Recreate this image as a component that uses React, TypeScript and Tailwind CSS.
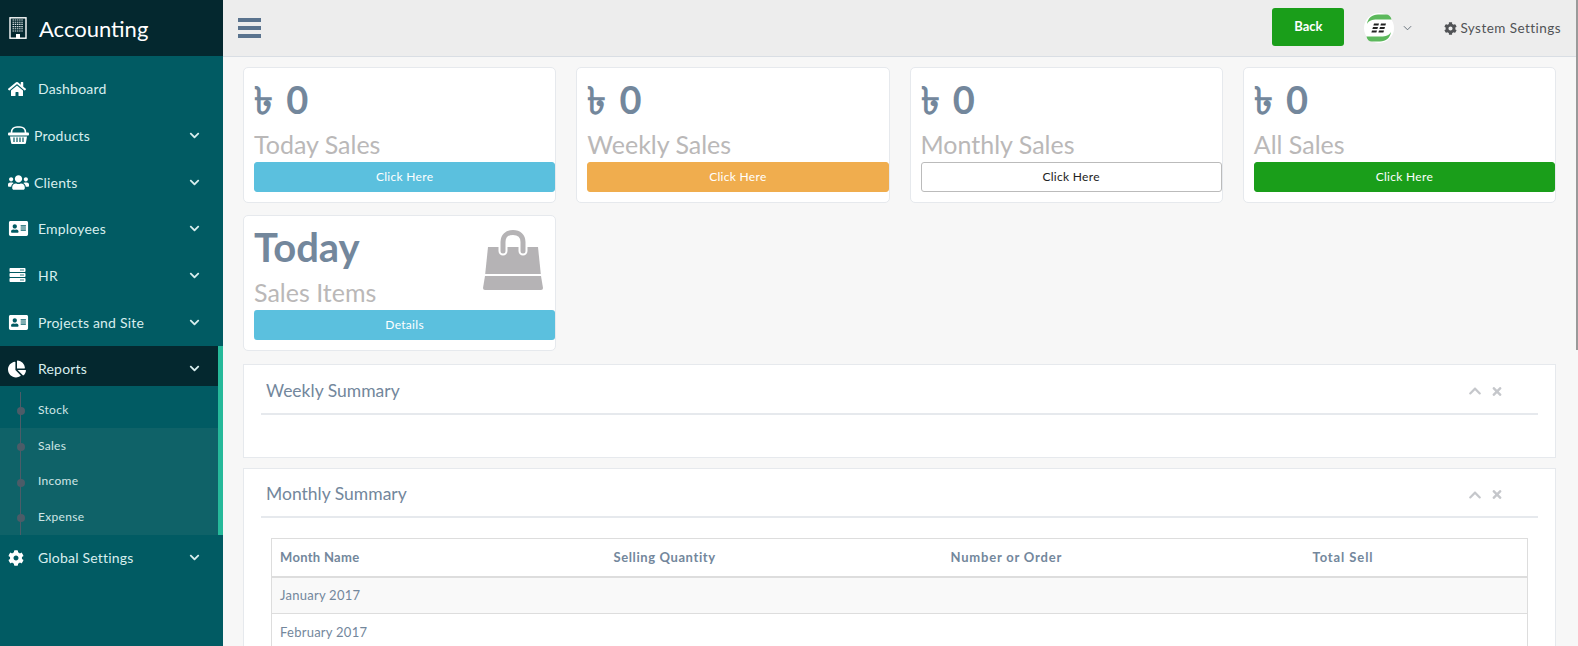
import type { ReactNode } from 'react';
import {
  FaAddressCard,
  FaChartPie,
  FaChevronDown,
  FaChevronUp,
  FaCog,
  FaHome,
  FaServer,
  FaTimes,
  FaUsers,
} from 'react-icons/fa';

function BasketIcon() {
  return (
    <svg viewBox="0 0 21 18" className="h-[18px] w-[21px]" fill="#fff">
      <path d="M3.500 7V6.500C3.500 3 6 1 9 1h3c3 0 5.500 2 5.500 5.500V7" fill="none" stroke="#fff" strokeWidth="1.6" />
      <rect x="0" y="6.500" width="21" height="3" rx="1" />
      <path d="M2 10.500h17l-1 6a1.500 1.500 0 0 1-1.500 1.500h-12A1.500 1.500 0 0 1 3 16.500z" />
      <path d="M6 11.500v4.500M9 11.500v4.500M12 11.500v4.500M15 11.500v4.500" stroke="#015b63" strokeWidth="1.2" />
    </svg>
  );
}

const menuItems = [
  { label: 'Products', icon: <BasketIcon />, textLeft: 'pl-[5px]' },
  { label: 'Clients', icon: <FaUsers className="h-[19px] w-[21px]" />, textLeft: 'pl-[5px]' },
  { label: 'Employees', icon: <FaAddressCard className="h-[17px] w-[21px]" />, textLeft: 'pl-[9px]' },
  { label: 'HR', icon: <FaServer className="h-[16px] w-[19px]" />, textLeft: 'pl-[9px]' },
  { label: 'Projects and Site', icon: <FaAddressCard className="h-[17px] w-[21px]" />, textLeft: 'pl-[9px]' },
];

const subItems = ['Stock', 'Sales', 'Income', 'Expense'];

const salesCards = [
  { label: 'Today Sales', button: 'bg-[#5bc0de] text-white border-[#5bc0de]' },
  { label: 'Weekly Sales', button: 'bg-[#f0ad4e] text-white border-[#f0ad4e]' },
  { label: 'Monthly Sales', button: 'bg-white text-[#222] border-[#bbb]' },
  { label: 'All Sales', button: 'bg-[#1a9e1a] text-white border-[#1a9e1a]' },
];

function BuildingIcon() {
  return (
    <svg viewBox="0 0 18 22" className="h-[22px] w-[18px]">
      <rect x="1" y="0.8" width="16" height="20.400" fill="#04282f" stroke="#fff" strokeWidth="1.4" />
      <path d="M3.500 3h11M3.500 5.200h11M3.500 7.400h11M3.500 9.600h11M3.500 11.800h11M3.500 14h11" stroke="#d5dde0" strokeWidth="1.1" strokeDasharray="1.5 0.7" />
      <rect x="7" y="17" width="4" height="4.500" fill="#fff" />
    </svg>
  );
}

function BagIcon() {
  return (
    <svg viewBox="0 0 60 60" className="h-[60px] w-[60px]">
      <path d="M5 17h50l2.800 27H2.200z" fill="#b5b3b5" />
      <path d="M20 21v-9C20 6 24 2.500 30 2.500S40 6 40 12v9" fill="none" stroke="#fff" strokeWidth="9" strokeLinecap="round" />
      <path d="M20 21v-9C20 6 24 2.500 30 2.500S40 6 40 12v9" fill="none" stroke="#b5b3b5" strokeWidth="5" strokeLinecap="round" />
      <path d="M2 46h56l2 12a2 2 0 0 1-2 2H2a2 2 0 0 1-2-2z" fill="#b5b3b5" />
    </svg>
  );
}

function LogoIcon() {
  return (
    <svg viewBox="0 0 30 30" className="h-[30px] w-[30px]">
      <circle cx="15" cy="15" r="15" fill="#fff" />
      <path d="M3 11C4 5 8 1.500 14 1.500h8c3 0 5 2 5.500 5H13c-5 0-8 1-10 4.500z" fill="#5cb85c" />
      <path d="M27 19c-1 6-5 9.500-11 9.500H8c-3 0-5-2-5.500-5H17c5 0 8-1 10-4.500z" fill="#5cb85c" />
      <path d="M10 10.500h5l-.6 2H9.400zM17 10.500h5l-.6 2h-5zM9 14h5l-.6 2H8.400zM16 14h5l-.6 2h-5zM8 17.500h5l-.6 2H7.400zM15 17.500h5l-.6 2h-5z" fill="#222" />
    </svg>
  );
}

function SideRow({ icon, label, textLeft, chevron = true }: { icon: ReactNode; label: string; textLeft: string; chevron?: boolean }) {
  return (
    <div className="flex h-[46.67px] items-center pb-[1px] pl-[8px] pr-[23px] text-[14px] tracking-[0.2px] text-[#d8eeee]">
      <span className="flex w-[21px] text-white">{icon}</span>
      <span className={`flex-1 ${textLeft}`}>{label}</span>
      {chevron && <FaChevronDown className="h-[11px] w-[11px]" />}
    </div>
  );
}

function Panel({ title, children, className, headerHeight }: { title: string; children?: ReactNode; className?: string; headerHeight: string }) {
  return (
    <section className={`border border-[#e6e9ed] bg-white px-[17px] ${className ?? ''}`}>
      <div className={`flex items-center border-b-2 border-[#e6e9ed] pl-[5px] pr-[35px] pt-[4px] text-[#73879c] ${headerHeight}`}>
        <h2 className="flex-1 text-[17.5px] font-normal">{title}</h2>
        <FaChevronUp className="mr-[9px] h-[14px] w-[14px] text-[#c5c7cb]" />
        <FaTimes className="h-[13px] w-[12px] text-[#c5c7cb]" />
      </div>
      {children}
    </section>
  );
}

export default function App() {
  return (
    <div className="relative flex h-screen overflow-hidden bg-[#f7f7f7] font-['Lato',sans-serif]">
      <aside className="w-[223px] shrink-0 bg-[#015b63]">
        <div className="flex h-[56px] items-center bg-[#04282f] pl-[9px] text-white">
          <BuildingIcon />
          <span className="pl-[12px] text-[22px]">Accounting</span>
        </div>
        <nav className="pt-[10px]">
          <SideRow icon={<FaHome className="h-[16px] w-[18px]" />} label="Dashboard" textLeft="pl-[9px]" chevron={false} />
          {menuItems.map((item) => (
            <SideRow key={item.label} icon={item.icon} label={item.label} textLeft={item.textLeft} />
          ))}

          <div className="border-r-[5px] border-[#26b99a]">
            <div className="flex h-[40px] items-center bg-[#04282f] pl-[8px] pr-[18px] pt-[6px] text-[14px] tracking-[0.2px] text-[#d8eeee]">
              <span className="flex w-[21px] text-white">
                <FaChartPie className="h-[18px] w-[18px]" />
              </span>
              <span className="flex-1 pl-[9px]">Reports</span>
              <FaChevronDown className="h-[11px] w-[11px]" />
            </div>
            <div className="relative">
              {subItems.map((name, i) => (
                <div
                  key={name}
                  className={`relative flex items-center pl-[38px] text-[12px] tracking-[0.3px] text-[#cfe6e6] ${i === 0 ? 'h-[42px] pt-[6px]' : 'h-[35.67px] bg-[#0f6268]'}`}
                >
                  <span className={`absolute left-[16.5px] z-10 h-[8px] w-[8px] rounded-full bg-[#4c5c68] ${i === 0 ? 'top-[21px]' : 'top-[15px]'}`} />
                  {name}
                </div>
              ))}
              <div className="absolute bottom-0 left-[20px] top-[6px] w-px bg-[#4c5c68]" />
            </div>
          </div>

          <SideRow icon={<FaCog className="h-[16px] w-[16px]" />} label="Global Settings" textLeft="pl-[9px]" />
        </nav>
      </aside>

      <div className="min-w-0 flex-1 pr-[1px]">
        <header className="flex h-[57px] items-center border-b border-[#d9dee4] bg-[#ededed] pl-[15px] pr-[16px]">
          <div className="flex flex-1 flex-col gap-[4px]">
            <span className="h-[4px] w-[23px] bg-[#5a738e]" />
            <span className="h-[4px] w-[23px] bg-[#5a738e]" />
            <span className="h-[4px] w-[23px] bg-[#5a738e]" />
          </div>
          <button type="button" className="-mt-[3px] h-[38px] w-[72px] rounded-[3px] bg-[#1a9e1a] text-[13px] font-bold text-white">
            Back
          </button>
          <span className="ml-[20px]">
            <LogoIcon />
          </span>
          <svg viewBox="0 0 10 6" className="ml-[9px] h-[6px] w-[9px]" fill="none" stroke="#5a6570" strokeWidth="1">
            <path d="M1 1l4 4 4-4" />
          </svg>
          <FaCog className="ml-[32px] h-[13px] w-[13px] text-[#515356]" />
          <span className="pl-[3px] text-[13.5px] tracking-[0.45px] text-[#515356]">System Settings</span>
        </header>

        <main className="pl-[20px] pr-[21px] pt-[10px]">
          <div className="grid grid-cols-4 gap-x-[20px] gap-y-[12px]">
            {salesCards.map((card) => (
              <div key={card.label} className="h-[136px] rounded-[5px] border border-[#e6e9ed] bg-white pl-[10px] pt-[8px]">
                <p className="h-[46px] text-[38px] font-bold leading-[46px] text-[#73879c]">
                  <span className="mr-[4px]">৳</span> 0
                </p>
                <p className="mt-[8px] h-[28px] text-[25px] leading-[28px] text-[#bab8b8]">{card.label}</p>
                <button type="button" className={`mt-[4px] h-[30px] w-full rounded-[3px] border text-[12px] tracking-[0.3px] ${card.button}`}>
                  Click Here
                </button>
              </div>
            ))}
            <div className="relative h-[136px] rounded-[5px] border border-[#e6e9ed] bg-white pl-[10px] pt-[8px]">
              <p className="h-[46px] text-[40px] font-bold leading-[46px] text-[#73879c]">Today</p>
              <p className="mt-[8px] h-[28px] text-[25px] leading-[28px] text-[#bab8b8]">Sales Items</p>
              <button type="button" className="mt-[4px] h-[30px] w-full rounded-[3px] bg-[#5bc0de] text-[12px] tracking-[0.3px] text-white">
                Details
              </button>
              <span className="absolute right-[12px] top-[14px]">
                <BagIcon />
              </span>
            </div>
          </div>

          <Panel title="Weekly Summary" headerHeight="h-[50px]" className="mt-[13px] h-[94px]" />

          <Panel title="Monthly Summary" headerHeight="h-[49px]" className="mt-[10px]">
            <table className="mt-[20px] ml-[10px] w-[1257px] table-fixed border border-[#dddddd] text-[13px] text-[#73879c]">
              <thead>
                <tr className="h-[38px] border-b-2 border-[#dddddd] text-left font-bold">
                  <th className="w-[334px] pl-[8px] tracking-[0.3px]">Month Name</th>
                  <th className="w-[337px] pl-[8px] tracking-[0.6px]">Selling Quantity</th>
                  <th className="w-[362px] pl-[8px] tracking-[0.8px]">Number or Order</th>
                  <th className="pl-[8px] tracking-[0.9px]">Total Sell</th>
                </tr>
              </thead>
              <tbody className="tracking-[0.25px]">
                <tr className="h-[37px] border-b border-[#dddddd] bg-[#f9f9f9]">
                  <td className="pl-[8px]">January 2017</td>
                  <td />
                  <td />
                  <td />
                </tr>
                <tr className="h-[37px] border-b border-[#dddddd]">
                  <td className="pl-[8px] pt-[2px]">February 2017</td>
                  <td />
                  <td />
                  <td />
                </tr>
              </tbody>
            </table>
          </Panel>
        </main>
      </div>

      <div className="absolute right-0 top-0 h-[350px] w-[2px] bg-[#9a9a9a]" />
    </div>
  );
}
